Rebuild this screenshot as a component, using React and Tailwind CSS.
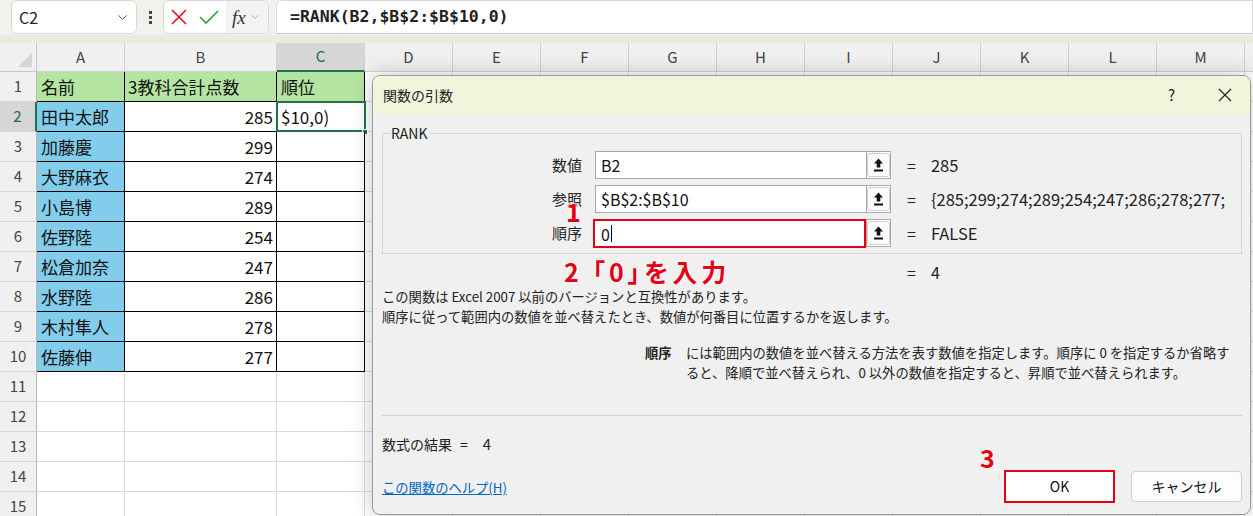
import React from 'react';
import { ChevronDown } from 'lucide-react';

const names = ['田中太郎', '加藤慶', '大野麻衣', '小島博', '佐野陸', '松倉加奈', '水野陸', '木村隼人', '佐藤伸'];
const scores = [285, 299, 274, 289, 254, 247, 286, 278, 277];
const moreCols = ['D', 'E', 'F', 'G', 'H', 'I', 'J', 'K', 'L', 'M', ''];

function UploadIcon() {
  return (
    <svg width="11" height="14" viewBox="0 0 11 14">
      <path d="M5.5 0.5 L10 5.5 H7.3 V9.5 H3.7 V5.5 H1 Z" fill="#111" />
      <rect x="1" y="11.5" width="9" height="2" fill="#111" />
    </svg>
  );
}

function ArgInput({ value, red }) {
  return (
    <div className={`flex h-[28px] ${red ? 'ml-[11px] w-[298px]' : 'ml-[13px] w-[296px]'}`}>
      <div
        className={`flex-1 bg-white flex items-center text-[16px] text-[#111] ${
          red ? 'border-2 border-[#e60012] pl-[6px] h-[29px]' : 'border border-[#a8a8a8] border-r-0 pl-[5px]'
        }`}
      >
        {value}
        {red && <span className="w-px h-[17px] bg-black ml-px" />}
      </div>
      <div className="w-[25px] h-[28px] bg-white border border-[#a8a8a8] flex items-center justify-center">
        <div className="w-[23px] h-[24px] rounded-[3px] border border-[#cfcfcf] bg-[#fbfbfb] flex items-center justify-center">
          <UploadIcon />
        </div>
      </div>
    </div>
  );
}

function ArgRow({ label, value, result, red }) {
  return (
    <div className="flex items-center h-[28px]">
      <div className="w-[199px] text-right text-[15px] text-[#222]">{label}</div>
      <ArgInput value={value} red={red} />
      <div className="ml-[16px] text-[16px] text-[#222]">=</div>
      <div className="ml-[15px] text-[16.5px] text-[#222] whitespace-nowrap overflow-hidden w-[297px]">{result}</div>
    </div>
  );
}

export default function App() {
  const gridCell = 'h-full border-r border-b border-[#dadada] shrink-0';
  const outline = '[text-shadow:0_0_2px_#fff,0_0_2px_#fff,0_0_2px_#fff]';
  return (
    <div className="w-[1253px] h-[516px] relative overflow-hidden bg-white font-['Noto_Sans_CJK_JP','Noto_Sans',sans-serif]">
      {/* formula bar */}
      <div className="h-[35px] bg-[#f1f2ec] flex items-start">
        <div className="ml-[11px] w-[126px] h-[34px] bg-white border border-[#d9d9d9] rounded-[6px] flex items-center justify-between pl-[7px] pr-[6px]">
          <span className="text-[16px] text-[#222]">C2</span>
          <ChevronDown size={15} strokeWidth={1.5} className="text-[#444]" />
        </div>
        <div className="w-[26px] h-[34px] flex flex-col items-center justify-center gap-[2px]">
          <span className="w-[3px] h-[3px] bg-[#444]" />
          <span className="w-[3px] h-[3px] bg-[#444]" />
          <span className="w-[3px] h-[3px] bg-[#444]" />
        </div>
        <div className="w-[106px] h-[34px] bg-white border border-[#d9d9d9] rounded-[6px] flex items-center overflow-hidden">
          <svg width="18" height="18" viewBox="0 0 18 18" className="ml-[6px]">
            <path d="M2 2 L16 16 M16 2 L2 16" stroke="#e81123" strokeWidth="1.6" />
          </svg>
          <svg width="22" height="18" viewBox="0 0 22 18" className="ml-[10px]">
            <path d="M2 9 L8 15 L20 3" stroke="#2f9e44" strokeWidth="1.6" fill="none" />
          </svg>
          <div className="ml-[6px] h-full flex-1 bg-[#f3f3f3] flex items-center pl-[6px]">
            <span className="font-['Liberation_Serif',serif] italic text-[19px] text-[#333] leading-none">fx</span>
            <ChevronDown size={12} strokeWidth={1.5} className="text-[#999] ml-[3px]" />
          </div>
        </div>
        <div className="ml-[7px] flex-1 h-[34px] bg-white border border-[#d9d9d9] border-b-[#c8c8c8] rounded-tl-[6px] flex items-center pl-[13px]">
          <span className="font-['DejaVu_Sans_Mono',monospace] font-bold text-[16.5px] text-[#222]">=RANK(B2,$B$2:$B$10,0)</span>
        </div>
      </div>
      <div className="h-[8px] bg-[#e8ecde]" />

      {/* column headers */}
      <div className="flex h-[29px] bg-[#f0f0f0] text-[15px] text-[#444]">
        <div className="w-[37px] h-full border-r border-b border-[#c6c6c6] relative shrink-0">
          <svg width="14" height="14" viewBox="0 0 14 14" className="absolute right-[4px] bottom-[4px]">
            <path d="M14 0 L14 14 L0 14 Z" fill="#d4d4d4" />
          </svg>
        </div>
        <div className="w-[88px] h-full border-r border-b border-[#d0d0d0] flex items-center justify-center shrink-0">A</div>
        <div className="w-[152px] h-full border-r border-b border-[#d0d0d0] flex items-center justify-center shrink-0">B</div>
        <div className="w-[88px] h-full border-r border-b-2 border-[#d0d0d0] border-b-[#217346] bg-[#d6d6d6] text-[#1e6b3f] flex items-center justify-center shrink-0">C</div>
        {moreCols.map((c, k) => (
          <div key={k} className="w-[88px] h-full border-r border-b border-[#d0d0d0] flex items-center justify-center shrink-0">{c}</div>
        ))}
      </div>

      {/* rows */}
      {Array.from({ length: 15 }, (_, i) => {
        const r = i + 1;
        const inTable = r <= 10;
        const tb = 'border-r border-b border-black';
        return (
          <div key={r} className="flex h-[30px]">
            <div
              className={`w-[37px] h-full shrink-0 flex items-center justify-center text-[15px] border-b border-[#d6d6d6] ${
                r === 2 ? 'bg-[#d6d6d6] text-[#1e6b3f] border-r-2 border-r-[#217346]' : 'bg-[#f0f0f0] text-[#444] border-r border-r-[#b8b8b8]'
              }`}
            >
              {r}
            </div>
            {inTable ? (
              <>
                <div
                  className={`w-[88px] h-full shrink-0 ${tb} flex items-center pl-[4px] text-[17px] text-[#111] ${
                    r === 1 ? 'bg-[#b4e5a3]' : 'bg-[#83cdec]'
                  }`}
                >
                  {r === 1 ? '名前' : names[r - 2]}
                </div>
                <div
                  className={`w-[152px] h-full shrink-0 ${tb} flex items-center text-[17px] text-[#111] ${
                    r === 1 ? 'bg-[#b4e5a3] pl-[3px]' : 'bg-white justify-end pr-[3px]'
                  }`}
                >
                  {r === 1 ? '3教科合計点数' : scores[r - 2]}
                </div>
                <div
                  className={`w-[88px] h-full shrink-0 ${tb} flex items-center pl-[4px] text-[17px] text-[#111] relative ${
                    r === 1 ? 'bg-[#b4e5a3]' : 'bg-white'
                  }`}
                >
                  {r === 1 && '順位'}
                  {r === 2 && (
                    <>
                      $10,0)
                      <div className="absolute -left-px -top-px w-[90px] h-[31px] border-2 border-[#217346]" />
                      <div className="absolute -right-[4px] -bottom-[4px] w-[6px] h-[6px] bg-[#217346] border border-white" />
                    </>
                  )}
                </div>
              </>
            ) : (
              <>
                <div className={`w-[88px] ${gridCell}`} />
                <div className={`w-[152px] ${gridCell}`} />
                <div className={`w-[88px] ${gridCell}`} />
              </>
            )}
            {moreCols.map((c, k) => (
              <div key={k} className={`w-[88px] ${gridCell}`} />
            ))}
          </div>
        );
      })}

      {/* dialog */}
      <div className="absolute left-[372px] top-[75px] w-[879px] h-[440px] bg-[#f0f0f0] border border-[#9a9a9a] rounded-[8px] shadow-[0_0_22px_rgba(0,0,0,0.22)] overflow-hidden flex flex-col">
        <div className="h-[38px] bg-[#f2f5dc] flex items-center pl-[10px] pr-[18px] shrink-0">
          <span className="text-[14px] text-[#222]">関数の引数</span>
          <span className="ml-auto text-[15px] text-[#222] mr-[43px]">?</span>
          <svg width="14" height="14" viewBox="0 0 14 14">
            <path d="M1 1 L13 13 M13 1 L1 13" stroke="#222" strokeWidth="1.2" />
          </svg>
        </div>
        <div className="pl-[9px] pr-[8px] flex flex-col">
          <fieldset className="mt-[11px] border border-[#d4d4d4] pb-[6px] pt-[10px] flex flex-col gap-[6px]">
            <legend className="ml-[7px] px-[1px] text-[14px] leading-[16px] text-[#222]">RANK</legend>
            <ArgRow label="数値" value="B2" result="285" />
            <ArgRow label="参照" value="$B$2:$B$10" result="{285;299;274;289;254;247;286;278;277;" />
            <ArgRow label="順序" value="0" result="FALSE" red />
          </fieldset>
          <div className="mt-[8px] h-[20px] flex items-center pl-[525px] text-[16px] text-[#222]">
            <span>=</span>
            <span className="ml-[15px]">4</span>
          </div>
          <div className="mt-[5px] text-[13.3px] leading-[20px] text-[#222]">
            <div>この関数は Excel 2007 以前のバージョンと互換性があります。</div>
            <div>順序に従って範囲内の数値を並べ替えたとき、数値が何番目に位置するかを返します。</div>
          </div>
          <div className="mt-[16px] flex text-[13.3px] leading-[20px] text-[#222]">
            <div className="w-[41px] ml-[263px] font-bold shrink-0">順序</div>
            <div className="flex-1">
              <div>には範囲内の数値を並べ替える方法を表す数値を指定します。順序に 0 を指定するか省略す</div>
              <div>ると、降順で並べ替えられ、0 以外の数値を指定すると、昇順で並べ替えられます。</div>
            </div>
          </div>
          <div className="mt-[32px] h-px bg-[#d4d4d4]" />
          <div className="mt-[18px] h-[20px] flex items-center text-[14px] text-[#222]">
            <span>数式の結果</span>
            <span className="ml-[8px]">=</span>
            <span className="ml-[15px] text-[15px]">4</span>
          </div>
          <div className="mt-[16px] flex items-center justify-between">
            <span className="text-[13.3px] text-[#0067c0] underline mt-[3px]">この関数のヘルプ(H)</span>
            <div className="flex items-center">
              <div className="w-[111px] h-[33px] border-2 border-[#e60012] bg-white flex items-center justify-center text-[14px] text-[#111]">OK</div>
              <div className="ml-[16px] w-[111px] h-[31px] border border-[#cfcfcf] rounded-[4px] bg-[#fdfdfd] flex items-center justify-center text-[14px] text-[#111]">キャンセル</div>
            </div>
          </div>
        </div>
      </div>

      {/* annotations */}
      <span className={`absolute left-[566px] top-[196px] text-[25px] leading-[30px] font-bold text-[#e60012] ${outline}`}>1</span>
      <span className={`absolute left-[564px] top-[256px] text-[25px] leading-[30px] font-bold text-[#e60012] tracking-[4px] [font-feature-settings:'palt'] ${outline}`}>2 「0」を入力</span>
      <span className={`absolute left-[980px] top-[442px] text-[25px] leading-[30px] font-bold text-[#e60012] ${outline}`}>3</span>
    </div>
  );
}
